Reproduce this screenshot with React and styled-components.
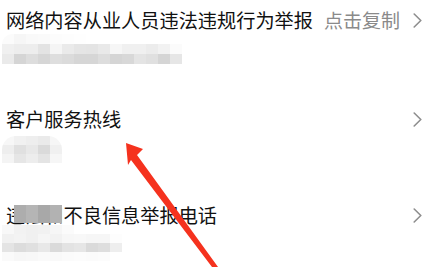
import React from 'react'
import styled, { createGlobalStyle } from 'styled-components'

const GlobalStyle = createGlobalStyle`
    html, body {
        margin: 0;
        padding: 0;
        background: #ffffff;
    }
    body {
        font-family: "Noto Sans CJK SC", "Noto Sans", sans-serif;
    }
`

const Page = styled.div`
    position: relative;
    width: 425px;
    height: 267px;
    overflow: hidden;
    background: #ffffff;
`

const List = styled.ul`
    list-style: none;
    margin: 0;
    padding: 0;
    display: flex;
    flex-direction: column;
`

const Item = styled.li`
    height: ${props => props.$height}px;
    padding-top: ${props => props.$top}px;
    box-sizing: border-box;
    display: flex;
    flex-direction: column;
`

const Head = styled.div`
    position: relative;
    display: flex;
    align-items: center;
    height: 24px;
    padding-left: 6px;
    padding-right: 3px;
`

const Title = styled.div`
    flex: 1;
    font-size: 19.2px;
    line-height: 24px;
    color: #111111;
    white-space: nowrap;
`

const Extra = styled.div`
    font-size: 19px;
    line-height: 24px;
    color: #8a8a8a;
    margin-right: 13px;
    white-space: nowrap;
`

const Chevron = styled.svg`
    width: 9px;
    height: 15px;
    flex-shrink: 0;
`

const Mosaic = styled.div`
    display: grid;
    grid-template-columns: repeat(${props => props.$cols}, ${props => props.$size}px);
    grid-auto-rows: ${props => props.$rowH}px;
    margin-top: ${props => props.$gap}px;
    margin-left: ${props => props.$left}px;
    filter: blur(0.6px);
    border-top-left-radius: ${props => props.$radius}px;
    border-top-right-radius: ${props => props.$radius}px;
    overflow: hidden;
    width: max-content;
`

const Cell = styled.div`
    background: ${props => props.$c};
`

const Cover = styled.div`
    position: absolute;
    left: 14px;
    top: 2px;
    display: grid;
    grid-template-columns: repeat(4, 12px);
    grid-auto-rows: 18px;
`

const Arrow = styled.svg`
    position: absolute;
    left: 0;
    top: 0;
    pointer-events: none;
`

const ChevronIcon = () => (
    <Chevron viewBox="0 0 9 15">
        <path d="M1.2 1 L7.8 7.5 L1.2 14" fill="none" stroke="#8e8e8e" strokeWidth="1.6" strokeLinecap="round" strokeLinejoin="round" />
    </Chevron>
)

const renderMosaic = (rows, props) => (
    <Mosaic $cols={rows[0].length} {...props}>
        {rows.flat().map((c, i) => <Cell key={i} $c={c} />)}
    </Mosaic>
)

const mosaicOne = [
    ['#fbfbfb', '#f6f6f6', '#f9f9f9', '#fafafa', '#fcfcfc', '#fdfdfd', '#fefefe', '#ffffff', '#ffffff', '#ffffff', '#ffffff', '#ffffff', '#ffffff', '#ffffff', '#ffffff'],
    ['#f0f0f0', '#ededed', '#ededed', '#e3e3e3', '#f5f5f5', '#eaeaea', '#e5e5e5', '#e4e4e4', '#e9e9e9', '#f6f6f6', '#f0f0f0', '#f0f0f0', '#ececec', '#f2f2f2', '#fbfbfb'],
    ['#eaeaea', '#d5d5d5', '#dddddd', '#d6d6d6', '#dedede', '#dbdbdb', '#d6d6d6', '#d6d6d6', '#dddddd', '#d5d5d5', '#d8d8d8', '#e4e4e4', '#e0e0e0', '#d5d5d5', '#e6e6e6']
]

const mosaicTwo = [
    ['#f7f7f7', '#f1f1f1', '#eeeeee', '#eaeaea', '#f6f6f6'],
    ['#eeeeee', '#e0e0e0', '#e8e8e8', '#dadada', '#f0f0f0'],
    ['#f4f4f4', '#e6e6e6', '#ededed', '#e4e4e4', '#f6f6f6']
]

const mosaicThree = [
    ['#f8f8f8', '#f2f2f2', '#f0f0f0', '#f1f1f1', '#f6f6f6', '#fbfbfb', '#ffffff', '#ffffff', '#ffffff', '#ffffff'],
    ['#f1f1f1', '#f3f3f3', '#f0f0f0', '#f5f5f5', '#f2f2f2', '#f7f7f7', '#f8f8f8', '#f6f6f6', '#f6f6f6', '#fdfdfd'],
    ['#e4e4e4', '#dcdcdc', '#e0e0e0', '#e8e8e8', '#dadada', '#e3e3e3', '#e6e6e6', '#dadada', '#dedede', '#eeeeee'],
    ['#fafafa', '#f7f7f7', '#f8f8f8', '#fafafa', '#f9f9f9', '#fbfbfb', '#fcfcfc', '#fbfbfb', '#fcfcfc', '#ffffff']
]

const cover = ['#adadad', '#b5b5b5', '#a8a8a8', '#b2b2b2']

const App = () => {
    return (
        <Page>
            <GlobalStyle />
            <List>
                <Item $height={99} $top={8}>
                    <Head>
                        <Title>网络内容从业人员违法违规行为举报</Title>
                        <Extra>点击复制</Extra>
                        <ChevronIcon />
                    </Head>
                    {renderMosaic(mosaicOne, { $size: 12, $rowH: 10, $gap: 2, $left: 2, $radius: 10 })}
                </Item>
                <Item $height={96} $top={8}>
                    <Head>
                        <Title>客户服务热线</Title>
                        <ChevronIcon />
                    </Head>
                    {renderMosaic(mosaicTwo, { $size: 12, $rowH: 9, $gap: 5, $left: 2, $radius: 14 })}
                </Item>
                <Item $height={72} $top={8}>
                    <Head>
                        <Title>违法和不良信息举报电话</Title>
                        <Cover>
                            {cover.map((c, i) => <Cell key={i} $c={c} />)}
                        </Cover>
                        <ChevronIcon />
                    </Head>
                    {renderMosaic(mosaicThree, { $size: 12, $rowH: 9, $gap: -2, $left: 2, $radius: 0 })}
                </Item>
            </List>
            <Arrow width="425" height="267" viewBox="0 0 425 267">
                <polygon points="126,143 143,149 137,155 218,267 212,267 131,160 128,165" fill="#f5321e" />
            </Arrow>
        </Page>
    )
}

export default App
